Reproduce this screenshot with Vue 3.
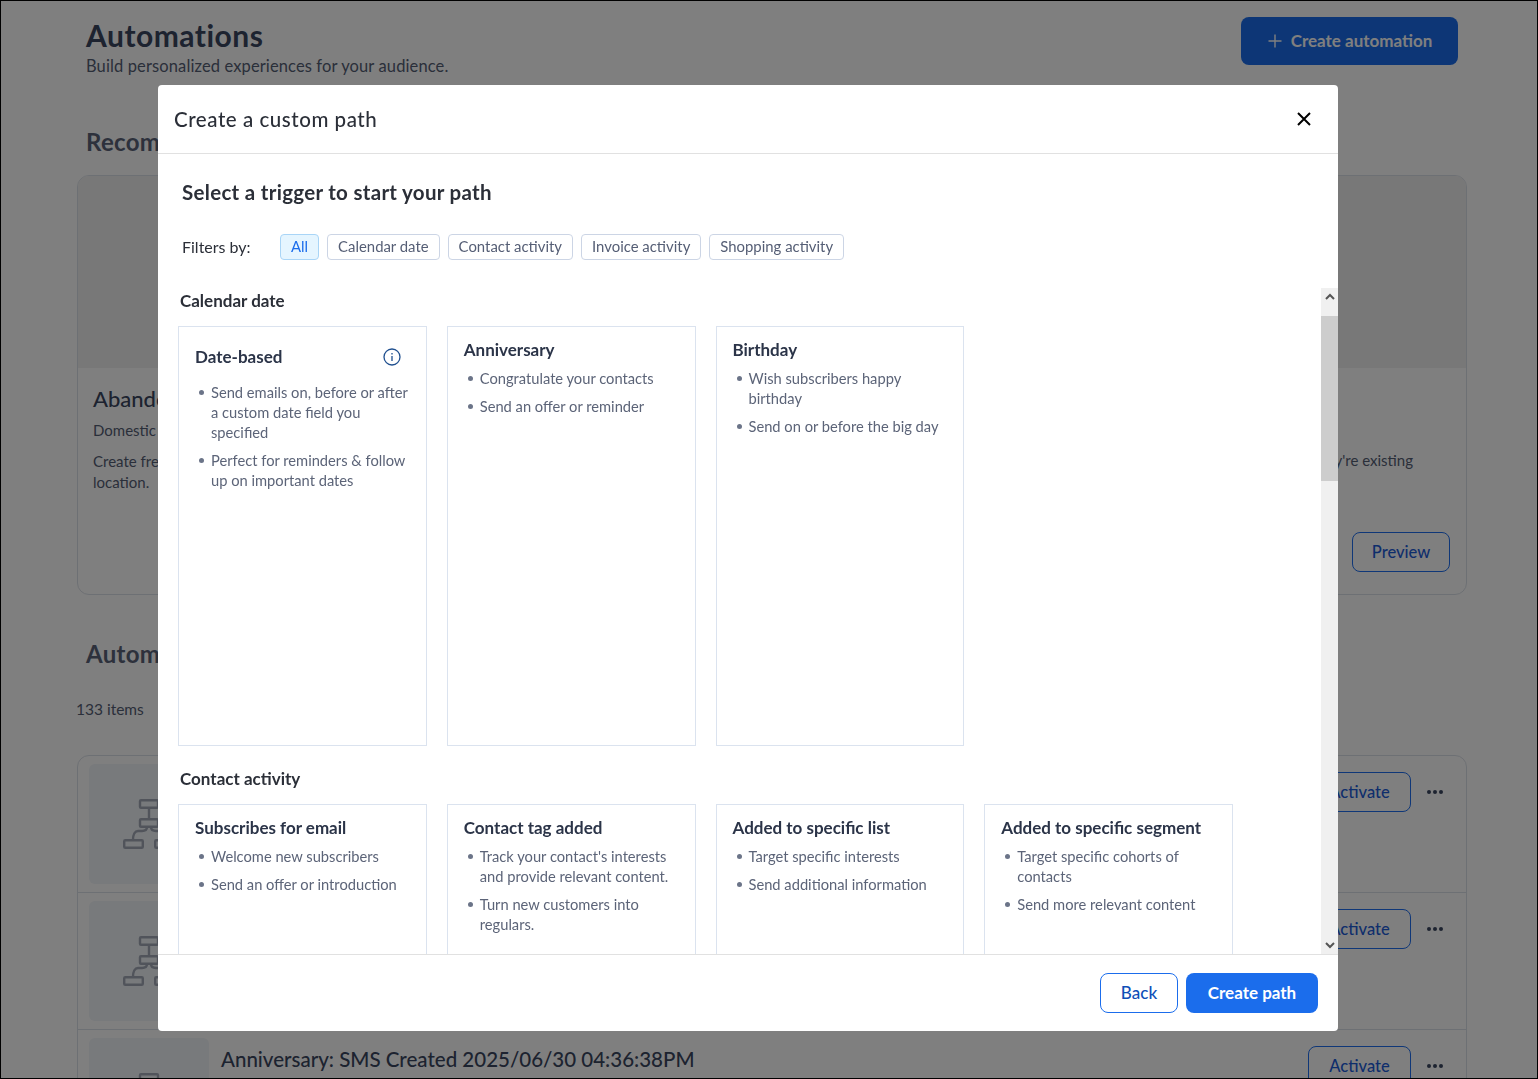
<script setup>
const sections = [
  {
    title: 'Calendar date',
    cards: [
      {
        title: 'Date-based',
        info: true,
        points: ['Send emails on, before or after a custom date field you specified', 'Perfect for reminders & follow up on important dates']
      },
      { title: 'Anniversary', points: ['Congratulate your contacts', 'Send an offer or reminder'] },
      { title: 'Birthday', points: ['Wish subscribers happy birthday', 'Send on or before the big day'] }
    ]
  },
  {
    title: 'Contact activity',
    cards: [
      { title: 'Subscribes for email', points: ['Welcome new subscribers', 'Send an offer or introduction'] },
      { title: 'Contact tag added', points: ["Track your contact's interests and provide relevant content.", 'Turn new customers into regulars.'] },
      { title: 'Added to specific list', points: ['Target specific interests', 'Send additional information'] },
      { title: 'Added to specific segment', points: ['Target specific cohorts of contacts', 'Send more relevant content'] }
    ]
  }
]

const filters = ['All', 'Calendar date', 'Contact activity', 'Invoice activity', 'Shopping activity']

const rows = [
  { id: 1, title: '' },
  { id: 2, title: '' },
  { id: 3, title: 'Anniversary: SMS Created 2025/06/30 04:36:38PM' }
]
</script>

<template>
  <div class="page">
    <!-- Page behind the dialog -->
    <header class="top">
      <div>
        <h1 class="top__title">Automations</h1>
        <p class="top__sub">Build personalized experiences for your audience.</p>
      </div>
      <button class="btn-create">
        <svg width="16" height="16" viewBox="0 0 16 16" fill="none" stroke="#fff" stroke-width="1.4">
          <path d="M8 1.5v13M1.5 8h13" />
        </svg>
        Create automation
      </button>
    </header>

    <h2 class="heading heading--rec">Recommended</h2>
    <section class="rec">
      <div class="rec__image"></div>
      <div class="rec__body">
        <div>
          <h3 class="rec__name">Abandoned</h3>
          <p class="rec__meta">Domestic</p>
          <p class="rec__text">Create free<br />location.</p>
        </div>
        <div class="rec__side">
          <p class="rec__text rec__text--side">they're existing</p>
          <button class="btn-outline btn-outline--preview">Preview</button>
        </div>
      </div>
    </section>

    <h2 class="heading heading--auto">Automations</h2>
    <p class="count">133 items</p>
    <section class="list">
      <div v-for="row in rows" :key="row.id" class="list__row">
        <div class="list__thumb">
          <svg width="52" height="50" viewBox="0 0 52 50" fill="none" stroke="#a2a9b6" stroke-width="2.4">
            <rect x="17" y="1.2" width="18" height="7.6" rx="1" />
            <rect x="17" y="20.2" width="18" height="7.6" rx="1" />
            <rect x="1.2" y="41.2" width="18.6" height="7.6" rx="1" />
            <rect x="32.2" y="41.2" width="18.6" height="7.6" rx="1" />
            <path d="M26 9v11M24 28c0 3-2 4-5 4h-4c-3 0-5 3-5 9M28 28c0 3 2 4 5 4h4c3 0 5 3 5 9" />
          </svg>
        </div>
        <div class="list__title">{{ row.title }}</div>
        <button class="btn-outline">Activate</button>
        <div class="list__more"><i></i><i></i><i></i></div>
      </div>
    </section>

    <!-- Dialog -->
    <div class="overlay">
      <div class="modal" role="dialog">
        <div class="modal__head">
          <span class="modal__title">Create a custom path</span>
          <svg width="16" height="16" viewBox="0 0 16 16" fill="none" stroke="#000" stroke-width="2">
            <path d="M2 2l12 12M14 2L2 14" />
          </svg>
        </div>

        <div class="modal__intro">
          <h2 class="modal__heading">Select a trigger to start your path</h2>
          <div class="filters">
            <span class="filters__label">Filters by:</span>
            <span
              v-for="(f, i) in filters"
              :key="f"
              class="chip"
              :class="{ 'chip--active': i === 0 }"
            >{{ f }}</span>
          </div>
        </div>

        <div class="modal__scroll">
          <div class="modal__content">
            <div v-for="s in sections" :key="s.title" class="group">
              <h3 class="group__title">{{ s.title }}</h3>
              <div class="group__grid">
                <div
                  v-for="c in s.cards"
                  :key="c.title"
                  class="card"
                  :class="{ 'card--info': c.info }"
                >
                  <div class="card__head">
                    <span class="card__title">{{ c.title }}</span>
                    <svg v-if="c.info" class="card__info" width="18" height="18" viewBox="0 0 18 18" fill="none" stroke="#1f4f8f" stroke-width="1.3">
                      <circle cx="9" cy="9" r="8" />
                      <path d="M9 8v5M9 5v1.4" />
                    </svg>
                  </div>
                  <ul class="card__list">
                    <li v-for="p in c.points" :key="p">{{ p }}</li>
                  </ul>
                </div>
              </div>
            </div>
          </div>
          <div class="scrollbar">
            <div class="scrollbar__btn">
              <svg width="10" height="7" viewBox="0 0 10 7" fill="none" stroke="#555" stroke-width="2"><path d="M1 6l4-4 4 4" /></svg>
            </div>
            <div class="scrollbar__thumb"></div>
            <div class="scrollbar__track"></div>
            <div class="scrollbar__btn scrollbar__btn--end">
              <svg width="10" height="7" viewBox="0 0 10 7" fill="none" stroke="#555" stroke-width="2"><path d="M1 1l4 4 4-4" /></svg>
            </div>
          </div>
        </div>

        <div class="modal__foot">
          <button class="btn-back">Back</button>
          <button class="btn-primary">Create path</button>
        </div>
      </div>
    </div>
  </div>
</template>

<style>
html,
body {
  margin: 0;
}
</style>

<style scoped>
.page {
  position: relative;
  box-sizing: border-box;
  width: 1538px;
  height: 1079px;
  padding-left: 76px;
  overflow: hidden;
  background: #fff;
  border: 1px solid #000;
  font-family: Lato, "Open Sans", sans-serif;
  color: #3a4660;
}

h1,
h2,
h3,
p,
ul {
  margin: 0;
  padding: 0;
}

button {
  font-family: inherit;
  cursor: pointer;
}

.top {
  display: flex;
  justify-content: space-between;
  padding: 16px 79px 0 9px;
}

.top__title {
  font-size: 30px;
  line-height: 36px;
  font-weight: 700;
  letter-spacing: 0.5px;
}

.top__sub {
  margin-top: 2px;
  font-size: 16.5px;
  line-height: 22px;
  letter-spacing: 0.12px;
  color: #555e75;
}

.btn-create {
  display: flex;
  align-items: center;
  justify-content: center;
  gap: 8px;
  width: 217px;
  height: 48px;
  padding-bottom: 2px;
  border: 0;
  border-radius: 8px;
  background: #1b6dec;
  color: #fff;
  font-size: 17px;
  font-weight: 700;
}

.heading {
  padding-left: 9px;
  font-size: 24px;
  line-height: 32px;
  font-weight: 700;
  letter-spacing: 0.3px;
  color: #5a6378;
}

.heading--rec {
  margin-top: 49px;
}

.heading--auto {
  margin-top: 43px;
}

.rec {
  box-sizing: border-box;
  width: 1390px;
  height: 420px;
  margin-top: 17px;
  border: 1px solid #dbe0e8;
  border-radius: 12px;
  overflow: hidden;
}

.rec__image {
  height: 192px;
  background: #f0f0f0;
}

.rec__body {
  display: flex;
  justify-content: space-between;
  padding: 17px 16px 0 15px;
}

.rec__name {
  font-size: 22px;
  line-height: 28px;
  font-weight: 500;
  color: #3a4660;
}

.rec__meta {
  margin-top: 7px;
  font-size: 15px;
  line-height: 20px;
  color: #555e75;
}

.rec__text {
  margin-top: 11px;
  font-size: 15px;
  line-height: 21px;
  color: #555e75;
}

.rec__side {
  display: flex;
  flex-direction: column;
  align-items: flex-end;
}

.rec__text--side {
  margin: 65px 37px 0 0;
}

.btn-outline {
  box-sizing: border-box;
  width: 103px;
  height: 40px;
  flex: none;
  margin-top: 8px;
  border: 1px solid #1f6ff0;
  border-radius: 8px;
  background: transparent;
  color: #1d5cd8;
  font-size: 16.5px;
  font-weight: 500;
}

.btn-outline--preview {
  width: 98px;
  margin-top: 61px;
}

.count {
  margin: 29px 0 0 -1px;
  font-size: 15.5px;
  line-height: 20px;
  color: #555e75;
}

.list {
  box-sizing: border-box;
  width: 1390px;
  margin-top: 36px;
  border: 1px solid #dbe0e8;
  border-radius: 12px 12px 0 0;
}

.list__row {
  display: flex;
  align-items: flex-start;
  gap: 12px;
  box-sizing: border-box;
  height: 137px;
  padding: 8px 19px 0 11px;
  border-bottom: 1px solid #dbe0e8;
}

.list__thumb {
  display: flex;
  align-items: center;
  justify-content: center;
  flex: none;
  width: 120px;
  height: 120px;
  border-radius: 6px;
  background: #f0f4f8;
}

.list__title {
  flex: 1;
  padding-top: 7px;
  font-size: 20.5px;
  line-height: 28px;
  font-weight: 500;
}

.list__more {
  display: flex;
  justify-content: center;
  gap: 2px;
  width: 24px;
  margin-top: 26px;
}

.list__more i {
  width: 4px;
  height: 4px;
  border-radius: 50%;
  background: #3a4660;
}

.overlay {
  position: fixed;
  inset: 0;
  display: flex;
  align-items: flex-start;
  box-sizing: border-box;
  padding: 85px 0 0 157px;
  background: rgba(0, 0, 0, 0.5);
  border: 1px solid #000;
}

.modal {
  display: flex;
  flex-direction: column;
  width: 1180px;
  height: 946px;
  margin-top: -1px;
  border-radius: 4px;
  background: #fff;
  overflow: hidden;
}

.modal__head {
  display: flex;
  align-items: center;
  justify-content: space-between;
  flex: none;
  box-sizing: border-box;
  height: 69px;
  padding: 0 26px 0 16px;
  border-bottom: 1px solid #e1e1e1;
}

.modal__title {
  font-size: 20.5px;
  font-weight: 500;
  letter-spacing: 0.55px;
  color: #2b2f38;
}

.modal__intro {
  flex: none;
  padding: 24px 24px 28px;
}

.modal__heading {
  font-size: 20.5px;
  line-height: 28px;
  font-weight: 700;
  letter-spacing: 0.3px;
  color: #2b2f38;
}

.filters {
  display: flex;
  align-items: center;
  gap: 8px;
  margin-top: 28px;
}

.filters__label {
  width: 90px;
  padding-bottom: 2px;
  font-size: 16px;
  color: #2b2f38;
}

.chip {
  display: flex;
  align-items: center;
  box-sizing: border-box;
  height: 26px;
  padding: 0 10px 2px;
  border: 1px solid #ccd5e5;
  border-radius: 4px;
  font-size: 14.9px;
  color: #555e75;
}

.chip--active {
  border-color: #a9d5f7;
  background: #e5f5ff;
  color: #1b6dec;
}

.modal__scroll {
  display: flex;
  flex: 1;
  min-height: 0;
}

.modal__content {
  flex: 1;
  padding: 2px 88px 0 20px;
  overflow: hidden;
}

.group + .group {
  margin-top: 22px;
}

.group__title {
  padding-left: 2px;
  font-size: 17px;
  line-height: 22px;
  font-weight: 700;
  color: #2b2f38;
}

.group__grid {
  display: grid;
  grid-template-columns: repeat(4, 1fr);
  gap: 20px;
  margin-top: 14px;
}

.card {
  box-sizing: border-box;
  height: 420px;
  padding: 12px 16px 0;
  border: 1px solid #dbe3ef;
}

.card--info {
  padding-top: 19px;
}

.card__head {
  display: flex;
  align-items: center;
  justify-content: space-between;
  height: 22px;
}

.card__title {
  padding-bottom: 2px;
  font-size: 17px;
  font-weight: 700;
  color: #2b3448;
}

.card__info {
  margin-right: 9px;
}

.card__list {
  display: flex;
  flex-direction: column;
  gap: 8px;
  margin-top: 7px;
  list-style: none;
}

.card--info .card__list {
  margin-top: 14px;
}

.card__list li {
  display: flex;
  gap: 7px;
  font-size: 14.7px;
  line-height: 20px;
  color: #5c6478;
}

.card__list li::before {
  content: "";
  flex: none;
  width: 5px;
  height: 5px;
  margin: 8px 0 0 4px;
  border-radius: 50%;
  background: #6b7488;
}

.scrollbar {
  display: flex;
  flex-direction: column;
  flex: none;
  width: 17px;
  background: #f0f0f0;
}

.scrollbar__btn {
  display: flex;
  justify-content: center;
  flex: none;
  height: 28px;
  padding-top: 5px;
  box-sizing: border-box;
  background: #f0f0f0;
}

.scrollbar__btn--end {
  align-items: flex-end;
  height: 17px;
  padding: 0 0 5px;
}

.scrollbar__thumb {
  flex: none;
  height: 165px;
  background: #cdcdcd;
}

.scrollbar__track {
  flex: 1;
}

.modal__foot {
  display: flex;
  align-items: center;
  justify-content: flex-end;
  gap: 8px;
  flex: none;
  box-sizing: border-box;
  height: 77px;
  padding: 0 20px;
  border-top: 1px solid #e1e1e1;
}

.btn-back,
.btn-primary {
  box-sizing: border-box;
  height: 40px;
  padding-bottom: 3px;
  border-radius: 8px;
  font-size: 17px;
  font-weight: 500;
}

.btn-back {
  width: 78px;
  border: 1px solid #1b6dec;
  background: #fff;
  color: #0f4fb8;
}

.btn-primary {
  width: 132px;
  border: 0;
  background: #1b6dec;
  color: #fff;
  font-weight: 700;
}
</style>
